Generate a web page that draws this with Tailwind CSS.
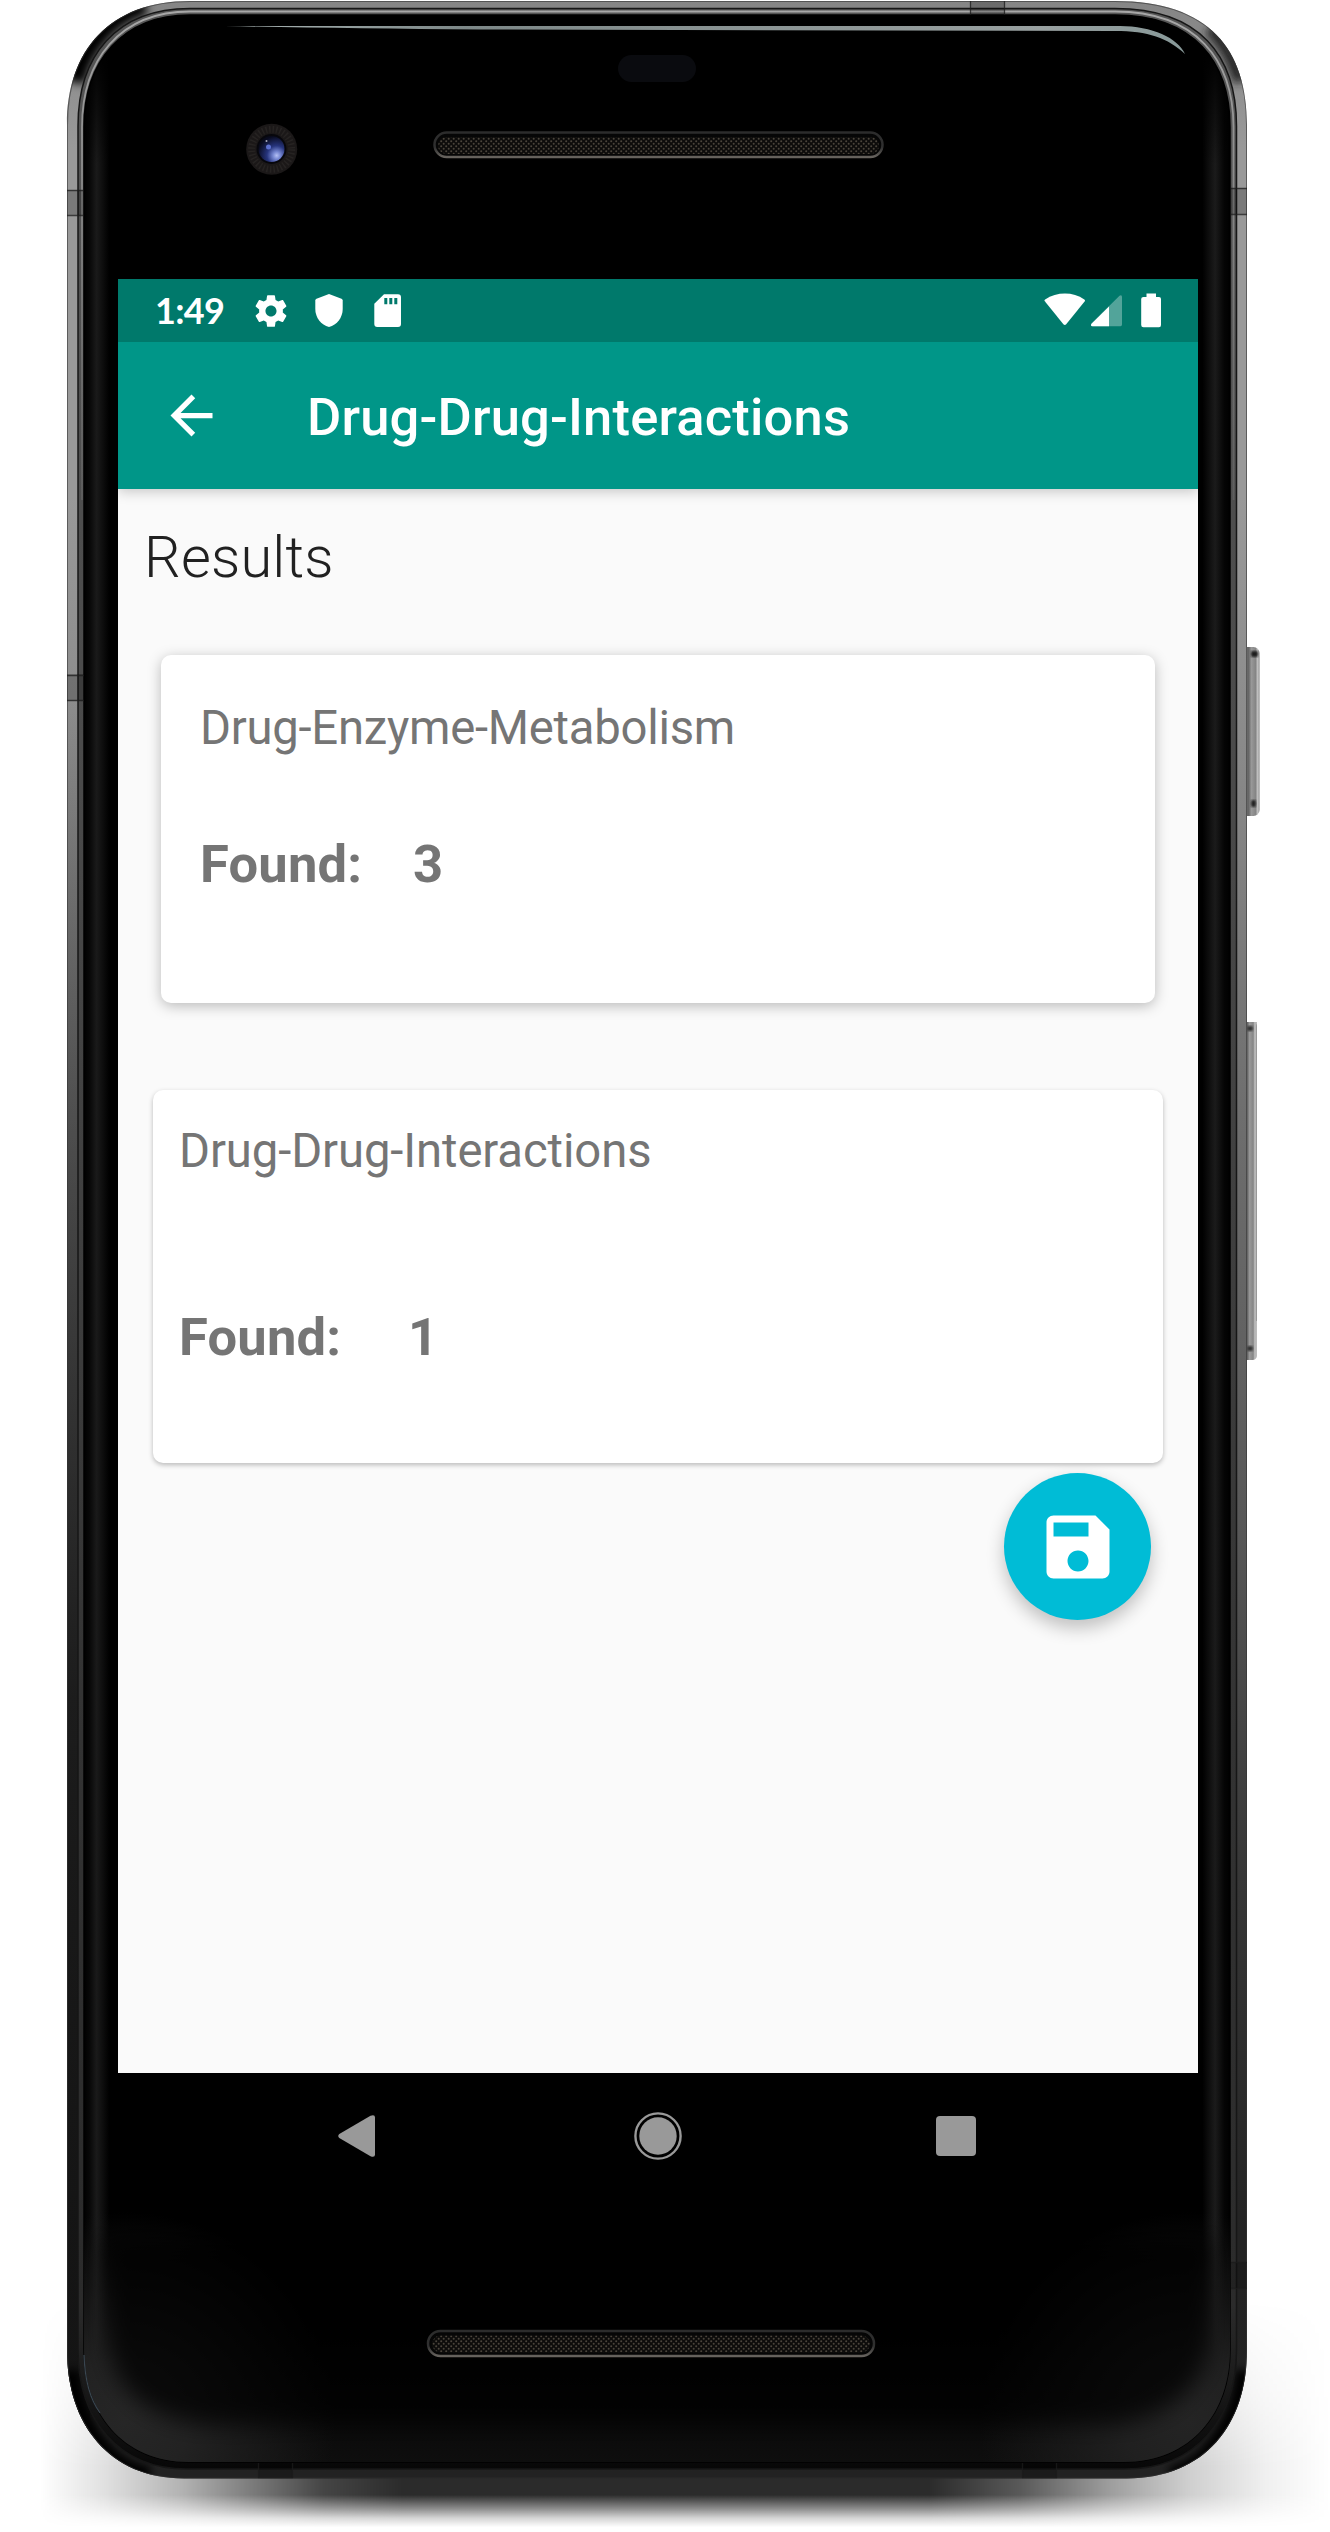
<!DOCTYPE html>
<html lang="en">
<head>
<meta charset="utf-8">
<title>Drug-Drug-Interactions</title>
<script src="https://cdn.jsdelivr.net/npm/@tailwindcss/browser@4"></script>
</head>
<body class="bg-white">
<div class="grid w-[1330px] h-[2532px] overflow-hidden font-['Roboto',sans-serif]">

  <!-- Device body -->
  <svg class="col-start-1 row-start-1 block" width="1330" height="2532" viewBox="0 0 1330 2532" aria-hidden="true">
    <defs>
      <path id="body" d="M190 1H1115C1210 1 1247 50 1247 125V2350C1247 2425 1205 2478 1127 2478.500H185C110 2479 67 2425 67 2350V125C67 50 110 1 190 1Z"/>
      <path id="rim" d="M190 8.500H1115C1200 8.500 1236.500 56 1236.500 126V2350C1236.500 2418 1197 2469 1125 2469H187C117 2469 78 2418 78 2350V126C78 56 116 8.500 190 8.500Z"/>
      <path id="glass" d="M190 15H1115C1194 15 1230 62 1230 127V2350C1230 2412 1192 2462 1123 2462H189C122 2462 84 2412 84 2350V127C84 62 122 15 190 15Z"/>
      <clipPath id="bodyClip"><use href="#body"/></clipPath>
      <clipPath id="glassClip"><use href="#glass"/></clipPath>
      <linearGradient id="metal" gradientUnits="userSpaceOnUse" x1="0" y1="0" x2="0" y2="2479">
        <stop offset="0" stop-color="#858585"/><stop offset=".06" stop-color="#999"/><stop offset=".2" stop-color="#999"/>
        <stop offset=".3" stop-color="#8a8a8a"/><stop offset=".45" stop-color="#6e6e6e"/><stop offset=".62" stop-color="#575757"/>
        <stop offset=".75" stop-color="#383838"/><stop offset=".9" stop-color="#232323"/><stop offset="1" stop-color="#222"/>
      </linearGradient>
      <linearGradient id="leftDark" gradientUnits="userSpaceOnUse" x1="0" y1="700" x2="0" y2="1700">
        <stop offset="0" stop-color="#111" stop-opacity="0"/><stop offset="1" stop-color="#111" stop-opacity=".8"/>
      </linearGradient>
      <linearGradient id="rimFill" gradientUnits="userSpaceOnUse" x1="0" y1="0" x2="0" y2="2479">
        <stop offset="0" stop-color="#555"/><stop offset=".3" stop-color="#4b4b4b"/><stop offset=".7" stop-color="#333"/><stop offset=".93" stop-color="#2b2b2b"/><stop offset="1" stop-color="#050505"/>
      </linearGradient>
      <linearGradient id="rimLight" gradientUnits="userSpaceOnUse" x1="0" y1="0" x2="0" y2="700">
        <stop offset="0" stop-color="#aaa"/><stop offset="1" stop-color="#777" stop-opacity="0"/>
      </linearGradient>
      <linearGradient id="edge" gradientUnits="userSpaceOnUse" x1="84" y1="0" x2="1230" y2="0">
        <stop offset="0" stop-color="#000"/><stop offset=".005" stop-color="#080808"/><stop offset=".011" stop-color="#1a1a1a"/><stop offset=".022" stop-color="#000"/>
        <stop offset=".976" stop-color="#000"/><stop offset=".987" stop-color="#1b1b1b"/><stop offset=".995" stop-color="#050505"/><stop offset="1" stop-color="#000"/>
      </linearGradient>
      <linearGradient id="edgeFade" x1="0" y1="0" x2="0" y2="1">
        <stop offset="0" stop-color="#000"/><stop offset=".25" stop-color="#000"/><stop offset="1" stop-color="#000" stop-opacity="0"/>
      </linearGradient>
      <linearGradient id="chin" x1="0" y1="0" x2="0" y2="1">
        <stop offset="0" stop-color="#0e0e0e" stop-opacity="0"/><stop offset="1" stop-color="#0e0e0e"/>
      </linearGradient>
      <radialGradient id="glowL" gradientUnits="userSpaceOnUse" cx="125" cy="2422" r="210">
        <stop offset="0" stop-color="#262626"/><stop offset=".3" stop-color="#222"/><stop offset="1" stop-color="#222" stop-opacity="0"/>
      </radialGradient>
      <radialGradient id="glowR" gradientUnits="userSpaceOnUse" cx="1190" cy="2422" r="210">
        <stop offset="0" stop-color="#242424"/><stop offset=".3" stop-color="#202020"/><stop offset="1" stop-color="#202020" stop-opacity="0"/>
      </radialGradient>
      <linearGradient id="shine" gradientUnits="userSpaceOnUse" x1="225" y1="0" x2="1185" y2="0">
        <stop offset="0" stop-color="#aab5b5"/><stop offset=".25" stop-color="#7d8888"/><stop offset=".85" stop-color="#98a0a0"/><stop offset="1" stop-color="#899"/>
      </linearGradient>
      <linearGradient id="shH" gradientUnits="userSpaceOnUse" x1="40" y1="0" x2="1330" y2="0">
        <stop offset="0" stop-color="#000" stop-opacity="0"/><stop offset=".05" stop-color="#000" stop-opacity=".12"/><stop offset=".11" stop-color="#000" stop-opacity=".3"/>
        <stop offset=".16" stop-color="#000" stop-opacity=".5"/><stop offset=".22" stop-color="#000" stop-opacity=".73"/><stop offset=".28" stop-color="#000" stop-opacity=".83"/>
        <stop offset=".69" stop-color="#000" stop-opacity=".83"/><stop offset=".76" stop-color="#000" stop-opacity=".65"/><stop offset=".83" stop-color="#000" stop-opacity=".38"/>
        <stop offset=".89" stop-color="#000" stop-opacity=".19"/><stop offset=".95" stop-color="#000" stop-opacity=".06"/><stop offset="1" stop-color="#000" stop-opacity="0"/>
      </linearGradient>
      <linearGradient id="shV" gradientUnits="userSpaceOnUse" x1="0" y1="2300" x2="0" y2="2532">
        <stop offset="0" stop-color="#000"/><stop offset=".4" stop-color="#777"/><stop offset=".72" stop-color="#fff"/><stop offset=".84" stop-color="#fff"/>
        <stop offset=".9" stop-color="#888"/><stop offset=".94" stop-color="#333"/><stop offset=".98" stop-color="#000"/>
      </linearGradient>
      <mask id="shMask" maskUnits="userSpaceOnUse" x="0" y="2300" width="1330" height="232"><rect y="2300" width="1330" height="232" fill="url(#shV)"/></mask>
      <radialGradient id="lens" cx=".7" cy=".75" r=".75">
        <stop offset="0" stop-color="#b4c0f4"/><stop offset=".2" stop-color="#7485d0"/><stop offset=".5" stop-color="#26347c"/><stop offset="1" stop-color="#080a1c"/>
      </radialGradient>
      <linearGradient id="lip" x1="0" y1="0" x2="0" y2="1"><stop offset="0" stop-color="#2c2c2c"/><stop offset=".6" stop-color="#303030"/><stop offset="1" stop-color="#67635e"/></linearGradient>
      <pattern id="mesh" width="5" height="5" patternUnits="userSpaceOnUse">
        <rect width="5" height="5" fill="#0d0c0b"/><circle cx="1.200" cy="1.200" r="1" fill="#4a443b"/><circle cx="3.700" cy="3.700" r="1" fill="#4a443b"/>
      </pattern>
      <linearGradient id="key" x1="0" y1="0" x2="1" y2="0">
        <stop offset="0" stop-color="#707070"/><stop offset=".45" stop-color="#666"/><stop offset=".58" stop-color="#999"/><stop offset=".8" stop-color="#858585"/><stop offset=".92" stop-color="#ccc"/><stop offset="1" stop-color="#777"/>
      </linearGradient>
      <filter id="b1"><feGaussianBlur stdDeviation="1"/></filter>
      <filter id="b3" x="-50%" y="-50%" width="200%" height="200%"><feGaussianBlur stdDeviation="5"/></filter>
    </defs>

    <!-- Ground shadow -->
    <rect x="0" y="2300" width="1330" height="232" fill="url(#shH)" mask="url(#shMask)"/>

    <!-- Side keys -->
    <rect x="1240" y="647" width="19.500" height="169" rx="6" fill="url(#key)"/>
    <rect x="1251" y="651" width="7" height="6" rx="2" fill="#1c1c1c" filter="url(#b1)"/><rect x="1251" y="800" width="5" height="7" rx="2" fill="#222" filter="url(#b1)"/>
    <rect x="1240" y="1022" width="16.500" height="299" fill="url(#key)"/>
    <rect x="1240" y="1022" width="16.500" height="338" rx="4" fill="url(#key)"/>
    <rect x="1247" y="1026" width="6" height="5" rx="2" fill="#333" filter="url(#b1)"/><rect x="1247" y="1346" width="6" height="5" rx="2" fill="#333" filter="url(#b1)"/>

    <use href="#body" fill="url(#metal)"/>
    <g clip-path="url(#bodyClip)">
      <rect x="60" y="700" width="30" height="1780" fill="url(#leftDark)"/>
      <path d="M74 82C82 45 112 12 145 4" fill="none" stroke="#050505" stroke-width="22" filter="url(#b3)"/>
      <path d="M1210 28Q1232 50 1240 82" fill="none" stroke="#222" stroke-width="14" filter="url(#b3)"/>
      <path d="M70 2370C74 2425 110 2472 150 2476" fill="none" stroke="#000" stroke-width="20" filter="url(#b3)"/>
      <path d="M1244 2370C1240 2425 1205 2468 1170 2476" fill="none" stroke="#000" stroke-width="18" filter="url(#b3)"/>
      <use href="#body" fill="none" stroke="#333" stroke-opacity=".6" stroke-width="2"/>
    </g>
    <use href="#rim" fill="url(#rimFill)" stroke="#161616" stroke-width="1.500"/>
    <path d="M82 500V127C82 60 120 11.500 190 11.500H1115C1196 11.500 1233.500 60 1233.500 127V500" fill="none" stroke="url(#rimLight)" stroke-width="1.800"/>
    <use href="#glass" fill="url(#edge)" stroke="#000" stroke-width="1.500"/>
    <g clip-path="url(#glassClip)">
      <rect x="84" y="15" width="1146" height="150" fill="url(#edgeFade)"/>
      <rect x="84" y="2330" width="1146" height="132" fill="url(#chin)"/>
      <rect x="84" y="2200" width="400" height="262" fill="url(#glowL)"/>
      <rect x="900" y="2200" width="330" height="262" fill="url(#glowR)"/>
      <path d="M104 2240H1210V2330C1210 2390 1160 2420 1110 2424H210C150 2420 108 2390 108 2330Z" fill="#040404" fill-opacity=".75" filter="url(#soft)"/>
    </g>
    <filter id="soft" x="-10%" y="-30%" width="120%" height="160%"><feGaussianBlur stdDeviation="11"/></filter>
    <path d="M84 2355C85 2385 92 2402 100 2413" fill="none" stroke="#3a4650" stroke-width="1.200"/>

    <!-- Antenna bands -->
    <g fill="#000" fill-opacity=".2" clip-path="url(#bodyClip)">
      <path d="M67 190H83V215H67Z"/><path d="M67 674H84V701H67Z"/><path d="M1231 188H1247V214H1231Z"/>
      <path d="M970 1V15H1005V1Z"/><path d="M258 2463V2479H293V2463Z"/><path d="M1022 2463V2479H1057V2463Z"/><path d="M1231 2262H1247V2288H1231Z"/>
    </g>
    <path d="M67 190.500H83M67 215.500H83M67 675.500H84M67 700.500H84M1231 188.500H1247M1231 214.500H1247M970.500 1V15M1004.500 1V15M258.500 2463V2478M292.500 2463V2478M1022.500 2463V2478M1056.500 2463V2478M1231 2262.500H1247M1231 2288.500H1247" stroke="#1c1c1c" stroke-opacity=".75" stroke-width="1.300"/>

    <!-- Glass highlight -->
    <path d="M225 26H1120C1152 26 1178 38 1185 54C1168 38 1148 31 1115 31L480 29.500Q340 28.500 225 26Z" fill="url(#shine)"/>

    <!-- Proximity sensor and camera -->
    <rect x="618" y="55" width="78" height="27" rx="13.500" fill="#0a0b0f"/>
    <circle cx="271.700" cy="149.300" r="25.500" fill="#1b1818"/>
    <circle cx="271.700" cy="149.300" r="20" fill="none" stroke="#262322" stroke-width="7" stroke-dasharray="1.500 2"/>
    <circle cx="271.500" cy="149" r="15" fill="#07070c"/>
    <circle cx="271.500" cy="149" r="13" fill="url(#lens)"/>
    <circle cx="268.500" cy="147" r="2.500" fill="#5d70cf"/><circle cx="266.500" cy="141" r="1" fill="#aab"/>

    <!-- Speakers -->
    <rect x="434.500" y="132.500" width="448" height="24.500" rx="12.200" fill="#060606" stroke="url(#lip)" stroke-width="2.500"/>
    <rect x="438" y="137" width="441" height="17" rx="8.500" fill="url(#mesh)"/>
    <rect x="428" y="2331" width="446" height="25" rx="12.500" fill="#060606" stroke="url(#lip)" stroke-width="2.500"/>
    <rect x="432" y="2335.500" width="438" height="17" rx="8.500" fill="url(#mesh)"/>
  </svg>

  <!-- Screen -->
  <main class="col-start-1 row-start-1 z-10 mt-[279px] ml-[118px] flex h-[1920px] w-[1080px] flex-col overflow-hidden">
    <header class="z-10 shrink-0 bg-[#009688] text-white shadow-[0_3px_12px_rgba(0,0,0,0.2)]">
      <div class="flex h-[63px] items-center bg-[#00796b] pl-[37px]">
        <span class="w-[72px] font-['Lato',sans-serif] text-[36px] leading-[63px] font-bold tracking-[-0.7px]">1:49</span>
        <svg class="ml-[25px]" width="38" height="38" viewBox="0 0 24 24" fill="currentColor" aria-label="Settings"><path d="M19.430 12.980c.04-.32.07-.64.07-.98s-.03-.66-.07-.98l2.110-1.650c.19-.15.24-.42.12-.64l-2-3.460c-.12-.22-.39-.3-.61-.22l-2.490 1c-.52-.4-1.080-.73-1.690-.98l-.38-2.650C14.460 2.180 14.250 2 14 2h-4c-.25 0-.46.18-.49.42l-.38 2.650c-.61.25-1.170.59-1.690.98l-2.490-1c-.23-.09-.49 0-.61.22l-2 3.460c-.13.22-.07.49.12.64l2.110 1.650c-.04.32-.07.65-.07.98s.03.66.07.98l-2.110 1.650c-.19.15-.24.42-.12.64l2 3.460c.12.22.39.3.61.22l2.490-1c.52.4 1.080.73 1.690.98l.38 2.650c.03.24.24.42.49.42h4c.25 0 .46-.18.49-.42l.38-2.650c.61-.25 1.170-.59 1.690-.98l2.490 1c.23.09.49 0 .61-.22l2-3.460c.12-.22.07-.49-.12-.64l-2.110-1.650zM12 15.500c-1.930 0-3.500-1.570-3.500-3.500s1.570-3.500 3.500-3.500 3.500 1.570 3.500 3.500-1.570 3.500-3.500 3.500z"/></svg>
        <svg class="ml-[25px]" width="28" height="33" viewBox="0 0 28 33" fill="currentColor" aria-label="Shield"><path d="M14 0L26.500 4.800Q27.700 5.300 27.700 6.600V15C27.700 23.500 22 31 14 33C6 31 .3 23.500.3 15V6.600Q.3 5.300 1.500 4.800Z"/></svg>
        <svg class="ml-[31px]" width="28" height="33" viewBox="0 0 28 33" fill="currentColor" aria-label="SD card"><path fill-rule="evenodd" d="M10 .3H24Q27 .3 27 3.300V30Q27 33 24 33H3.300Q.3 33 .3 30V9.800ZM10.300 4V10.300H13.300V4ZM15.300 4V10.300H18.300V4ZM20.300 4V10.300H23.300V4Z"/></svg>
        <svg class="mr-[36px] ml-auto" width="118" height="36" viewBox="0 0 118 36" fill="currentColor" aria-label="Wi-Fi, signal, battery">
          <path d="M.8 8.300Q0 7.300 1.100 6.400C13-1.400 29-1.400 40.300 6.400Q41.500 7.300 40.600 8.500L22.200 31.200Q20.800 32.800 19.400 31.200Z"/>
          <path d="M47.500 33.300Q46 31.500 48 30L75.500 2.800Q78 1.500 78 4V31.500Q78 33.300 76.500 33.300Z" fill-opacity=".32"/>
          <path d="M65 13.500V33.300H48.500Q46 32.800 47.500 30.700Z"/>
          <path d="M102.500.6H112V4H115Q117 4 117 6V32Q117 34.300 115 34.300H99.500Q97.200 34.300 97.200 32V6Q97.200 4 99.500 4H102.500Z"/>
        </svg>
      </div>
      <div class="flex h-[147px] items-center pl-[42px]">
        <svg width="63" height="63" viewBox="0 0 24 24" fill="currentColor" aria-label="Back"><path d="M20 11H7.830l5.590-5.590L12 4l-8 8 8 8 1.410-1.410L7.830 13H20v-2z"/></svg>
        <h1 class="mt-[2px] ml-[84px] text-[52.5px] leading-[62px] font-medium tracking-[0.18px] whitespace-nowrap">Drug-Drug-Interactions</h1>
      </div>
    </header>

    <section class="flex h-[1584px] shrink-0 flex-col bg-[#fafafa] text-[#757575]">
      <h2 class="ml-[26px] pt-[34px] text-[57.75px] leading-[68px] font-light tracking-[0.2px] text-[#212121]">Results</h2>

      <article class="mt-[64px] ml-[43px] h-[348px] w-[994px] shrink-0 rounded-[10px] bg-white pt-[45px] pl-[39px] shadow-[0_3px_14px_rgba(0,0,0,0.26)]">
        <h3 class="text-[47.25px] leading-[56px] tracking-[-0.26px]">Drug-Enzyme-Metabolism</h3>
        <p class="mt-[77px] flex text-[52.5px] leading-[62px] font-bold tracking-[0.2px]"><span class="w-[213px]">Found:</span><span>3</span></p>
      </article>

      <article class="mt-[87px] ml-[35px] h-[373px] w-[1010px] shrink-0 rounded-[10px] bg-white pt-[33px] pl-[26px] shadow-[0_2px_5px_rgba(0,0,0,0.26)]">
        <h3 class="text-[47.25px] leading-[56px] tracking-[-0.1px]">Drug-Drug-Interactions</h3>
        <p class="mt-[127px] flex text-[52.5px] leading-[62px] font-bold tracking-[0.2px]"><span class="w-[229px]">Found:</span><span>1</span></p>
      </article>

      <button class="mt-[10px] mr-[47px] flex size-[147px] shrink-0 items-center justify-center self-end rounded-full bg-[#00bcd6] text-white shadow-[0_8px_18px_rgba(0,0,0,0.24)]" aria-label="Save">
        <svg width="84" height="84" viewBox="0 0 24 24" fill="currentColor"><path d="M17 3H5c-1.110 0-2 .9-2 2v14c0 1.100.89 2 2 2h14c1.100 0 2-.9 2-2V7l-4-4zm-5 16c-1.660 0-3-1.340-3-3s1.340-3 3-3 3 1.340 3 3-1.340 3-3 3zm3-10H5V5h10v4z"/></svg>
      </button>
    </section>

    <nav class="flex h-[126px] shrink-0 items-center bg-black pl-[220px] text-[#999]">
      <svg width="38" height="44" viewBox="0 0 38 44" fill="currentColor" aria-label="Back"><path d="M1.300 20Q-.8 22 1.300 24L32.500 42.300Q37 44 37 40.500V3.500Q37 0 32.500 1.700Z"/></svg>
      <svg class="ml-[258px]" width="48" height="48" viewBox="0 0 48 48" aria-label="Home"><circle cx="24" cy="24" r="22.600" fill="none" stroke="currentColor" stroke-width="2.400"/><circle cx="24" cy="24" r="18.700" fill="currentColor"/></svg>
      <span class="ml-[254px] size-10 rounded-[4px] bg-[#999]"></span>
    </nav>
  </main>
</div>
</body>
</html>
